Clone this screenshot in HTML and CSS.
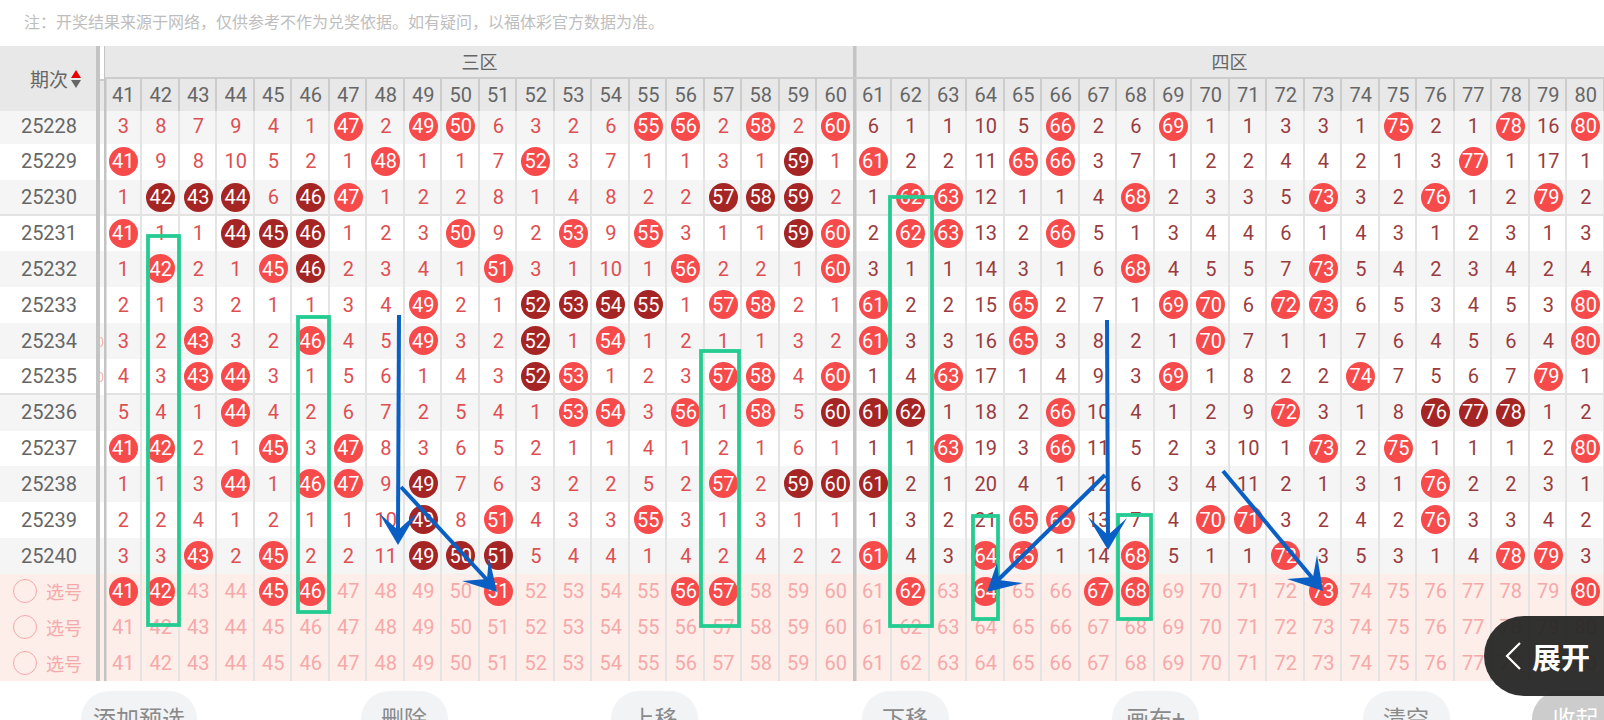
FILE: index.html
```html
<!DOCTYPE html>
<html lang="zh-CN">
<head>
  <meta charset="UTF-8">
  <meta name="viewport" content="width=device-width, initial-scale=1.0">
  <title>走势图</title>
  <link rel="stylesheet" href="styles.css">
</head>
<body>
  <p class="note">注：开奖结果来源于网络，仅供参考不作为兑奖依据。如有疑问，以福体彩官方数据为准。</p>

  <div class="board">
    <div class="board-head">
      <div class="period-head">
        <span>期次</span>
        <span class="sort">
          <i class="sort-up"></i>
          <i class="sort-down"></i>
        </span>
      </div>
      <div class="gutter gutter-top"></div>
      <div class="zone zone-a">三区</div>
      <div class="zone zone-b">四区</div>
      <div class="gutter gutter-head"></div>
      <div class="head-nums" id="headNums"></div>
    </div>
    <div id="rows"></div>
  </div>

  <div class="actions">
    <button>添加预选</button>
    <button>删除</button>
    <button>上移</button>
    <button>下移</button>
    <button>画布+</button>
    <button>清空</button>
    <button class="collapse">收起</button>
  </div>

  <div class="expand">
    <svg width="18" height="30" viewBox="0 0 18 30"><path d="M16 2 L3 15 L16 28" fill="none" stroke="#fff" stroke-width="2.2"/></svg>
    <span>展开</span>
  </div>

  <!-- hand-drawn marks on top of the chart -->
  <svg class="marks" width="1604" height="720" viewBox="0 0 1604 720">
    <g fill="none" stroke="#25cc92" stroke-width="3.8">
      <rect x="148" y="236" width="31" height="389"/>
      <rect x="298" y="317" width="31" height="295"/>
      <rect x="701" y="351" width="38" height="275"/>
      <rect x="890" y="197" width="42" height="429"/>
      <rect x="973" y="516" width="25" height="103"/>
      <rect x="1118" y="515" width="33" height="104"/>
    </g>
    <g fill="none" stroke="#0a5fc4" stroke-width="4">
      <path d="M399 315 L398 532"/>
      <path d="M401 487 L490 583"/>
      <path d="M1107 320 L1108 536"/>
      <path d="M1105 475 L998 580"/>
      <path d="M1223 471 L1314 580"/>
    </g>
    <g fill="#0a5fc4">
      <path d="M398 545 L379 513 L398 530 L417 513 Z"/>
      <path d="M497 592 L462 581 L487 579 L489 557 Z"/>
      <path d="M1108 550 L1088 517 L1108 535 L1127 518 Z"/>
      <path d="M987 592 L1023 583 L999 580 L997 563 Z"/>
      <path d="M1323 591 L1287 579 L1313 577 L1317 555 Z"/>
    </g>
  </svg>

  <script src="app.js"></script>
</body>
</html>
```

FILE: styles.css
```css
* {
  box-sizing: border-box;
}
html, body {
  margin: 0;
  height: 720px;
  overflow: hidden;
}
body {
  position: relative;
  width: 1604px;
  background-color: #fff;
  font-family: Roboto, "Noto Sans CJK SC", sans-serif;
}
.note {
  margin: 0;
  height: 46px;
  padding: 12px 0 0 24px;
  font-size: 16px;
  line-height: 22px;
  color: #bebebe;
}

/* header */
.board-head {
  display: grid;
  grid-template-columns: 96px 8.5px 750px 750px;
  grid-template-rows: 33px 32px;
  background-color: #e8e8e8;
}
.period-head {
  grid-row: 1 / 3;
  display: flex;
  align-items: center;
  justify-content: flex-end;
  gap: 3px;
  padding: 0 15px 0 0;
  font-size: 19px;
  color: #666;
}
.sort {
  display: flex;
  flex-direction: column;
  gap: 2px;
}
.sort i {
  display: block;
  width: 0;
  height: 0;
  border-left: 5px solid transparent;
  border-right: 5px solid transparent;
}
.sort-up {
  border-bottom: 8px solid #e60000;
}
.sort-down {
  border-top: 8px solid #666;
}
.gutter {
  border-left: 4px solid #c4c4c4;
  border-right: 1.5px solid #c4c4c4;
}
.gutter-top {
  background-color: #fff;
}
.gutter-head {
  grid-column: 2;
  background-color: #e8e8e8;
  box-shadow: inset 0 2px #ccc;
}
.zone {
  display: flex;
  align-items: center;
  justify-content: center;
  padding-bottom: 4px;
  font-size: 18px;
  color: #666;
  box-shadow: inset 0 -2px #ccc;
}
.zone-a {
  box-shadow: inset 0 -2px #ccc, inset -2px 0 #c4c4c4;
}
.zone-b {
  box-shadow: inset 0 -2px #ccc, inset 1.5px 0 #c4c4c4;
}
.head-nums {
  grid-column: 3 / 5;
  display: grid;
  grid-template-columns: repeat(40, 37.5px);
}
.head-nums span {
  display: flex;
  align-items: center;
  justify-content: center;
  font-size: 20px;
  color: #666;
  box-shadow: inset -2px 0 #ccc;
}
.head-nums span:nth-child(1) {
  box-shadow: inset -2px 0 #ccc, inset 1.5px 0 #c4c4c4;
}
.head-nums span:nth-child(20) {
  box-shadow: inset -2px 0 #c4c4c4;
}
.head-nums span:nth-child(21) {
  box-shadow: inset -2px 0 #ccc, inset 1.5px 0 #c4c4c4;
}

/* rows */
.row {
  display: grid;
  grid-template-columns: 96px 8.5px repeat(40, 37.5px);
  height: 35.83px;
  background-color: #fff;
}
.row:nth-child(odd) {
  background-color: #f5f5f5;
}
.row.first {
  height: 33px;
}
.row.first .cell, .row.first .period {
  padding-bottom: 3px;
}
.period {
  display: flex;
  align-items: center;
  justify-content: center;
  font-size: 20px;
  color: #666;
  padding: 0 0 1px 2px;
}
.cell {
  display: flex;
  align-items: center;
  justify-content: center;
  padding-bottom: 1px;
  font-size: 20px;
  color: #de4f52;
  box-shadow: inset -2px 0 #e4e4e4;
}
.cell.zone4 {
  color: #9a3c3e;
}
.cell.c1, .cell.c21 {
  box-shadow: inset -2px 0 #e4e4e4, inset 1.5px 0 #c4c4c4;
}
.cell.c20 {
  box-shadow: inset -2px 0 #c4c4c4;
}
.row.split .period,
.row.split .cell {
  box-shadow: inset -2px 0 #e4e4e4, inset 0 -2px #e2e2e2;
}
.row.split .period {
  box-shadow: inset 0 -2px #e2e2e2;
}
.row.split .cell.c1, .row.split .cell.c21 {
  box-shadow: inset -2px 0 #e4e4e4, inset 1.5px 0 #c4c4c4, inset 0 -2px #e2e2e2;
}
.row.split .cell.c20 {
  box-shadow: inset -2px 0 #c4c4c4, inset 0 -2px #e2e2e2;
}
.ball {
  display: flex;
  align-items: center;
  justify-content: center;
  width: 29px;
  height: 29px;
  border-radius: 50%;
  background-color: #f74a4a;
  color: #fff;
}
.ball.dark {
  background-color: #a52525;
}
.gutter.clipped {
  display: flex;
  align-items: center;
}
.gutter.clipped::before {
  content: "";
  width: 2px;
  height: 8px;
  margin-top: 1px;
  border: 1px solid #f6b0b0;
  border-left: 0;
  border-radius: 0 4px 4px 0;
}

/* pick rows */
.row.pick {
  background-color: #fdeee9;
}
.row.pick .cell {
  color: #f6a9a9;
}
.row.pick .cell .ball {
  color: #fff;
}
.pick-label {
  display: flex;
  align-items: center;
  gap: 9px;
  padding: 0 0 2px 13px;
  font-size: 18px;
  color: #f6a9a9;
}
.pick-label i {
  width: 24px;
  height: 24px;
  border: 1.5px solid #f6a9a9;
  border-radius: 50%;
}

/* bottom buttons */
.actions {
  display: flex;
  gap: 163.5px;
  padding: 10px 0 0 81px;
}
.actions button {
  flex: none;
  width: 87px;
  height: 56px;
  padding: 0 0 4px;
  border: none;
  border-radius: 28px;
  background-color: #f2f3f5;
  font-family: inherit;
  font-size: 23px;
  color: #8a8a8a;
}
.actions button:first-child {
  width: 116px;
}
.actions .collapse {
  margin-left: -81px;
  background-color: #ccc;
  color: #fff;
}

/* floating toggle */
.expand {
  position: absolute;
  right: 0;
  top: 616px;
  display: flex;
  align-items: center;
  gap: 10px;
  width: 120px;
  height: 80px;
  padding-left: 20px;
  border-radius: 40px 0 0 40px;
  background-color: rgba(38, 38, 38, 0.95);
  color: #fff;
  font-size: 29px;
  font-weight: 700;
}
.expand svg {
  flex: none;
}
.marks {
  position: absolute;
  left: 0;
  top: 0;
  pointer-events: none;
}
```

FILE: app.js
```js
// 期号 + the 40 cells, a trailing * means a dark ball
const history = [
  ['25228', '3 8 7 9 4 1 47 2 49 50 6 3 2 6 55 56 2 58 2 60 6 1 1 10 5 66 2 6 69 1 1 3 3 1 75 2 1 78 16 80'],
  ['25229', '41 9 8 10 5 2 1 48 1 1 7 52 3 7 1 1 3 1 59* 1 61 2 2 11 65 66 3 7 1 2 2 4 4 2 1 3 77 1 17 1'],
  ['25230', '1 42* 43* 44* 6 46* 47 1 2 2 8 1 4 8 2 2 57* 58* 59* 2 1 62 63 12 1 1 4 68 2 3 3 5 73 3 2 76 1 2 79 2'],
  ['25231', '41 1 1 44* 45* 46* 1 2 3 50 9 2 53 9 55 3 1 1 59* 60 2 62 63 13 2 66 5 1 3 4 4 6 1 4 3 1 2 3 1 3'],
  ['25232', '1 42 2 1 45 46* 2 3 4 1 51 3 1 10 1 56 2 2 1 60 3 1 1 14 3 1 6 68 4 5 5 7 73 5 4 2 3 4 2 4'],
  ['25233', '2 1 3 2 1 1 3 4 49 2 1 52* 53* 54* 55* 1 57 58 2 1 61 2 2 15 65 2 7 1 69 70 6 72 73 6 5 3 4 5 3 80'],
  ['25234', '3 2 43 3 2 46 4 5 49 3 2 52* 1 54 1 2 1 1 3 2 61 3 3 16 65 3 8 2 1 70 7 1 1 7 6 4 5 6 4 80'],
  ['25235', '4 3 43 44 3 1 5 6 1 4 3 52* 53 1 2 3 57 58 4 60 1 4 63 17 1 4 9 3 69 1 8 2 2 74 7 5 6 7 79 1'],
  ['25236', '5 4 1 44 4 2 6 7 2 5 4 1 53 54 3 56 1 58 5 60* 61* 62* 1 18 2 66 10 4 1 2 9 72 3 1 8 76* 77* 78* 1 2'],
  ['25237', '41 42 2 1 45 3 47 8 3 6 5 2 1 1 4 1 2 1 6 1 1 1 63 19 3 66 11 5 2 3 10 1 73 2 75 1 1 1 2 80'],
  ['25238', '1 1 3 44 1 46 47 9 49* 7 6 3 2 2 5 2 57 2 59* 60* 61* 2 1 20 4 1 12 6 3 4 11 2 1 3 1 76 2 2 3 1'],
  ['25239', '2 2 4 1 2 1 1 10 49* 8 51 4 3 3 55 3 1 3 1 1 1 3 2 21 65 66 13 7 4 70 71 3 2 4 2 76 3 3 4 2'],
  ['25240', '3 3 43 2 45 2 2 11 49* 50* 51* 5 4 4 1 4 2 4 2 2 61 4 3 64 65 1 14 68 5 1 1 72 3 5 3 1 4 78 79 3']
];
const picks = [
  [41, 42, 45, 46, 51, 56, 57, 62, 64, 67, 68, 73, 80],
  [],
  []
];

const headNums = document.getElementById('headNums');
const rowsEl = document.getElementById('rows');

for (let n = 41; n <= 80; n++) {
  const span = document.createElement('span');
  span.textContent = n;
  headNums.appendChild(span);
}

function makeCell(index, value, isBall, isDark) {
  const cell = document.createElement('div');
  cell.className = 'cell c' + (index + 1) + (index >= 20 ? ' zone4' : '');
  if (isBall) {
    const ball = document.createElement('span');
    ball.className = isDark ? 'ball dark' : 'ball';
    ball.textContent = value;
    cell.appendChild(ball);
  } else {
    cell.textContent = value;
  }
  return cell;
}

history.forEach(([period, line], i) => {
  const row = document.createElement('div');
  row.className = 'row';
  if (i === 0) row.classList.add('first');
  if (i === 2 || i === 7) row.classList.add('split');

  const label = document.createElement('div');
  label.className = 'period';
  label.textContent = period;
  row.appendChild(label);

  const gutter = document.createElement('div');
  gutter.className = i === 6 || i === 7 ? 'gutter clipped' : 'gutter';
  row.appendChild(gutter);

  line.split(' ').forEach((raw, c) => {
    const value = parseInt(raw, 10);
    row.appendChild(makeCell(c, value, value === 41 + c, raw.endsWith('*')));
  });
  rowsEl.appendChild(row);
});

picks.forEach((chosen) => {
  const row = document.createElement('div');
  row.className = 'row pick';

  const label = document.createElement('div');
  label.className = 'pick-label';
  label.innerHTML = '<i></i><span>选号</span>';
  row.appendChild(label);

  const gutter = document.createElement('div');
  gutter.className = 'gutter';
  row.appendChild(gutter);

  for (let c = 0; c < 40; c++) {
    row.appendChild(makeCell(c, 41 + c, chosen.includes(41 + c), false));
  }
  rowsEl.appendChild(row);
});
```
